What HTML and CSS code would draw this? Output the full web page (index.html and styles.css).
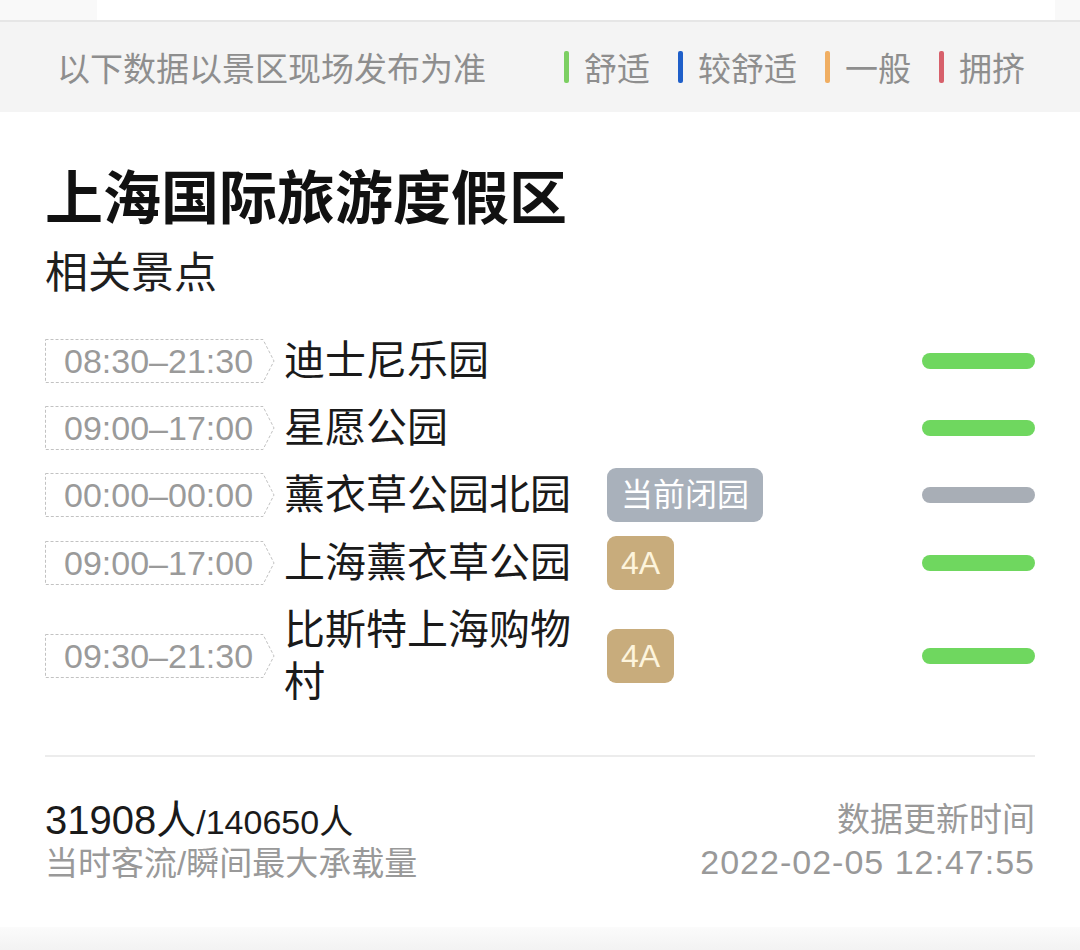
FILE: index.html
```
<!DOCTYPE html>
<html lang="zh-CN">
  <head>
    <meta charset="UTF-8" />
    <meta name="viewport" content="width=device-width, initial-scale=1.0" />
    <title>上海国际旅游度假区</title>
    <link rel="stylesheet" href="styles.css">
  </head>
  <body>
    <div class="top-strip">
      <div class="top-strip-inner"></div>
    </div>

    <div class="notice">
      <span class="notice-text">以下数据以景区现场发布为准</span>
      <div class="legend">
        <span class="legend-item"><i class="mark green"></i>舒适</span>
        <span class="legend-item"><i class="mark blue"></i>较舒适</span>
        <span class="legend-item"><i class="mark orange"></i>一般</span>
        <span class="legend-item"><i class="mark red"></i>拥挤</span>
      </div>
    </div>

    <div class="card">
      <h1 class="title">上海国际旅游度假区</h1>
      <h2 class="subtitle">相关景点</h2>

      <ul class="spots">
        <li class="spot">
          <span class="time">08:30–21:30</span>
          <span class="name">迪士尼乐园</span>
          <span class="level green"></span>
        </li>
        <li class="spot">
          <span class="time">09:00–17:00</span>
          <span class="name">星愿公园</span>
          <span class="level green"></span>
        </li>
        <li class="spot">
          <span class="time">00:00–00:00</span>
          <span class="name">薰衣草公园北园</span>
          <span class="badge closed">当前闭园</span>
          <span class="level gray"></span>
        </li>
        <li class="spot">
          <span class="time">09:00–17:00</span>
          <span class="name">上海薰衣草公园</span>
          <span class="badge grade">4A</span>
          <span class="level green"></span>
        </li>
        <li class="spot">
          <span class="time">09:30–21:30</span>
          <span class="name">比斯特上海购物村</span>
          <span class="badge grade">4A</span>
          <span class="level green"></span>
        </li>
      </ul>

      <div class="footer">
        <div class="flow">
          <div class="flow-count"><span class="now">31908人</span>/140650人</div>
          <div class="muted">当时客流/瞬间最大承载量</div>
        </div>
        <div class="updated">
          <div class="muted">数据更新时间</div>
          <div class="muted stamp">2022-02-05 12:47:55</div>
        </div>
      </div>
    </div>

    <div class="bottom-fade"></div>
  </body>
</html>
```

FILE: styles.css
```
/* page */
body {
  margin: 0;
  width: 1080px;
  background: #f3f3f3;
  font-family: "Liberation Sans", "Noto Sans CJK SC", sans-serif;
  color: #1a1a1a;
}

.top-strip {
  height: 20px;
  padding: 0 25px 0 97px;
  background: #f9f9f9;
}

.top-strip-inner {
  height: 20px;
  background: #ffffff;
}

/* notice + legend */
.notice {
  height: 90px;
  border-top: 2px solid #e6e6e6;
  background: #f4f4f4;
  padding: 0 55px 0 57px;
  display: flex;
  align-items: center;
  justify-content: space-between;
  font-size: 33px;
  color: #8e8e8e;
}

.legend {
  display: flex;
  gap: 28px;
}

.legend-item {
  display: flex;
  align-items: center;
}

.mark {
  display: inline-block;
  width: 5px;
  height: 32px;
  border-radius: 2px;
  margin-right: 15px;
}

.mark.green { background: #7ccf62; }
.mark.blue { background: #1f5fc9; }
.mark.orange { background: #f0ae62; }
.mark.red { background: #d7606b; }

/* card */
.card {
  background: #ffffff;
  padding: 52px 45px 42px;
}

.title {
  margin: 0;
  font-size: 58px;
  line-height: 70px;
  font-weight: 700;
  color: #111;
}

.subtitle {
  margin: 11px 0 0;
  font-size: 43px;
  line-height: 56px;
  font-weight: 400;
  color: #1f1f1f;
}

.spots {
  list-style: none;
  margin: 26px 0 0;
  padding: 0;
}

.spot {
  display: flex;
  align-items: center;
  box-sizing: border-box;
  min-height: 67px;
  padding: 7px 0;
}

.time {
  flex: none;
  box-sizing: border-box;
  width: 230px;
  height: 44px;
  padding-left: 19px;
  font-size: 34px;
  line-height: 44px;
  color: #9a9a9a;
  background: url("data:image/svg+xml;utf8,<svg xmlns='http://www.w3.org/2000/svg' width='230' height='44'><path d='M0.5 0.5H218L229 22L218 43.5H0.5Z' fill='none' stroke='%23c2c2c2' stroke-width='1' stroke-dasharray='3 2'/></svg>") no-repeat;
}

.name {
  flex: none;
  width: 296px;
  margin-left: 9px;
  font-size: 41px;
  line-height: 52px;
  color: #1a1a1a;
}

.badge {
  flex: none;
  margin-left: 27px;
  height: 54px;
  padding: 0 14px;
  border-radius: 9px;
  font-size: 32px;
  line-height: 54px;
}

.badge.closed {
  background: #a9b1bb;
  color: #ffffff;
}

.badge.grade {
  background: #c8ac7c;
  color: #fdf4dc;
}

.level {
  flex: none;
  margin-left: auto;
  width: 113px;
  height: 16px;
  border-radius: 8px;
}

.level.green { background: #6fd75f; }
.level.gray { background: #a8aeb6; }

/* footer */
.footer {
  margin-top: 40px;
  border-top: 2px solid #ececec;
  padding-top: 42px;
  display: flex;
  justify-content: space-between;
  line-height: 42px;
}

.flow-count {
  font-size: 34px;
  color: #1a1a1a;
}

.flow-count .now {
  font-size: 40px;
}

.muted {
  font-size: 33px;
  color: #999;
}

.updated {
  text-align: right;
}

.stamp {
  font-size: 34px;
  letter-spacing: 1px;
}

.bottom-fade {
  height: 25px;
  background: linear-gradient(#fbfbfb, #f2f2f2);
}
```
